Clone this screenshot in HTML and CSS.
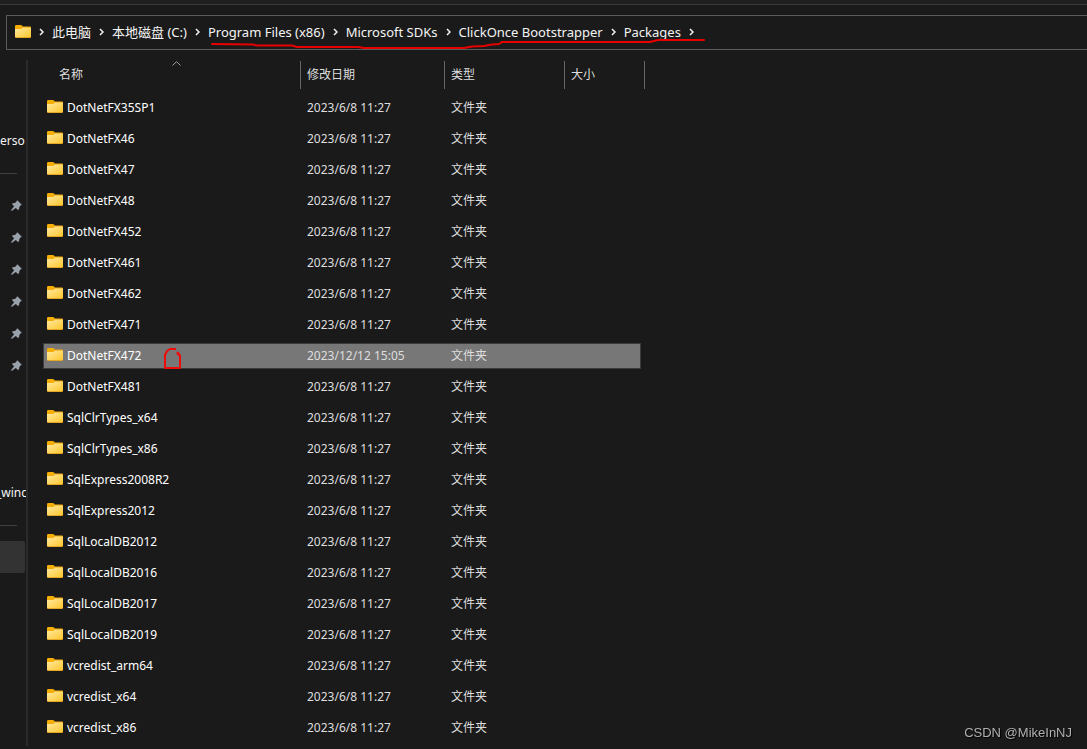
FILE: index.html
```
<!DOCTYPE html>
<html lang="zh-CN">
<head>
<meta charset="utf-8">
<title>Packages</title>
<link rel="stylesheet" href="styles.css">
</head>
<body>
<svg class="defs" aria-hidden="true">
  <defs>
    <linearGradient id="fold" x1="0" y1="0" x2="1" y2="1">
      <stop offset="0" stop-color="#ffe9a2"/><stop offset="1" stop-color="#ffc72e"/>
    </linearGradient>
    <symbol id="folder" viewBox="0 0 16 13">
      <path d="M0 1.2Q0 0 1.2 0H6.2L8 1.6H15Q16 1.6 16 2.6V6H0Z" fill="#f5ad08"/>
      <path d="M0 4H6.2L8 2.4H15.2Q16 2.4 16 3.2V12Q16 13 15 13H1Q0 13 0 12Z" fill="#dc9a18"/>
      <path d="M0 4H6.2L8 2.4H15.2Q16 2.4 16 3.2V11.3Q16 12.2 15 12.2H1Q0 12.2 0 11.3Z" fill="url(#fold)"/>
    </symbol>
    <symbol id="chev" viewBox="0 0 5 8">
      <path d="M1 1L4 4L1 7" fill="none" stroke="#f2f2f2" stroke-width="1.5"/>
    </symbol>
    <symbol id="pin" viewBox="0 0 11 11">
      <path d="M6.3 0.2L10.8 4.7L9.7 5.2L8.4 7L8 9.4L7 10L4.8 7.9L1 10.8L0.2 10.8L0.2 10L3.1 6.2L1 4L1.6 3.2L4 3L5.6 1.3Z" fill="#98a1a9"/>
    </symbol>
  </defs>
</svg>
<div class="toolbar-edge"></div>
<header class="address">
  <nav class="crumbs" aria-label="路径">
    <svg class="folder"><use href="#folder"/></svg>
    <svg class="chev"><use href="#chev"/></svg>
    <a class="crumb" href="#">此电脑</a>
    <svg class="chev"><use href="#chev"/></svg>
    <a class="crumb" href="#">本地磁盘 (C:)</a>
    <svg class="chev"><use href="#chev"/></svg>
    <a class="crumb" href="#">Program Files (x86)</a>
    <svg class="chev"><use href="#chev"/></svg>
    <a class="crumb" href="#">Microsoft SDKs</a>
    <svg class="chev"><use href="#chev"/></svg>
    <a class="crumb" href="#">ClickOnce Bootstrapper</a>
    <svg class="chev"><use href="#chev"/></svg>
    <a class="crumb" href="#">Packages</a>
    <svg class="chev"><use href="#chev"/></svg>
  </nav>
  <svg class="underline" viewBox="0 0 496 12" aria-hidden="true"><path d="M2 5L43 5.5L47 6.5H82L87 8H148L154 9H254L262 7.5L274 7L282 5.5L289 5L292 3H440L448 1H494"/></svg>
</header>
<div class="window">
  <aside class="side">
    <a class="side-item" href="#">erso</a>
    <div class="side-rule"></div>
    <div class="side-item pinned"><svg class="pin"><use href="#pin"/></svg></div>
    <div class="side-item pinned"><svg class="pin"><use href="#pin"/></svg></div>
    <div class="side-item pinned"><svg class="pin"><use href="#pin"/></svg></div>
    <div class="side-item pinned"><svg class="pin"><use href="#pin"/></svg></div>
    <div class="side-item pinned"><svg class="pin"><use href="#pin"/></svg></div>
    <div class="side-item pinned"><svg class="pin"><use href="#pin"/></svg></div>
    <div class="side-item"></div>
    <div class="side-item"></div>
    <div class="side-item"></div>
    <a class="side-item scrolled" href="#">_winc</a>
    <div class="side-rule"></div>
    <div class="side-item active"></div>
  </aside>
  <main class="files">
    <table class="list">
      <colgroup><col class="c-name"><col class="c-date"><col class="c-type"><col class="c-size"><col class="c-end"></colgroup>
      <thead>
        <tr>
          <th><button class="sort first" type="button">名称<svg class="asc" viewBox="0 0 9 5"><path d="M0.5 4.5L4.5 0.7L8.5 4.5"/></svg></button></th>
          <th><button class="sort" type="button">修改日期</button></th>
          <th><button class="sort" type="button">类型</button></th>
          <th colspan="2"><button class="sort" type="button">大小</button></th>
        </tr>
      </thead>
      <tbody id="rows"></tbody>
    </table>
  </main>
</div>
<div class="watermark">CSDN @MikeInNJ</div>
<script src="files.js"></script>
</body>
</html>
```
FILE: styles.css
```
* { box-sizing: border-box; }
body {
  margin: 0;
  min-height: 100vh;
  background: #1a1a1a;
  color: #f4f4f4;
  font: 12px/16px "Noto Sans", "Noto Sans CJK SC", sans-serif;
  overflow: hidden;
}
a { color: inherit; text-decoration: none; }
.defs { position: absolute; width: 0; height: 0; }
.toolbar-edge { height: 5px; background: #202020; border-bottom: 1px solid #3a3a3a; }
.address {
  position: relative;
  margin: 10px 0 0 6px;
  height: 35px;
  border: 1px solid #5a5a5a;
  border-right: 0;
  display: flex;
  align-items: center;
}
.crumbs { display: flex; align-items: center; gap: 8px; padding: 0 0 2px 8px; font-size: 13px; white-space: nowrap; }
.folder { width: 16px; height: 13px; flex: none; }
.chev { width: 5px; height: 8px; flex: none; }
.underline { position: absolute; left: 203px; top: 23px; width: 496px; height: 12px; overflow: visible; }
.underline path { fill: none; stroke: #e60000; stroke-width: 2; stroke-linecap: round; stroke-linejoin: round; }
.window { display: flex; }
.side { width: 28px; flex: none; margin-top: 10px; padding-top: 65px; border-right: 2px solid #2b2b2b; overflow: hidden; }
.side-item { display: flex; align-items: center; width: 25px; height: 32px; overflow: hidden; }
.side-item.scrolled { width: 30px; margin-left: -4px; }
.side-rule { display: flex; align-items: center; height: 32px; }
.side-rule::before { content: ""; width: 17px; height: 1px; background: #3f3f3f; }
.pinned { padding-left: 11px; }
.pin { width: 11px; height: 11px; flex: none; }
.active { background: #333; border-radius: 0 2px 2px 0; }
.files { flex: 1; padding: 5px 0 0 15px; }
.list { width: 602px; table-layout: fixed; border-collapse: separate; border-spacing: 0 5px; }
.c-name { width: 258px; }
.c-date { width: 144px; }
.c-type { width: 120px; }
.c-size { width: 76px; }
.c-end { width: 4px; }
.list th { height: 30px; padding: 0; text-align: left; vertical-align: middle; font-weight: 400; }
.sort {
  position: relative;
  display: block;
  width: 100%;
  height: 28px;
  padding: 0 6px;
  border: 0;
  border-right: 1px solid #666;
  background: none;
  color: #dedede;
  font: inherit;
  text-align: left;
}
.sort.first { padding-left: 16px; }
.asc { position: absolute; left: 50%; top: 0; width: 9px; height: 5px; }
.asc path { fill: none; stroke: #a0a0a0; }
.list td { height: 26px; padding: 0 6px; color: #dedede; }
.list td:first-child { padding-left: 4px; color: #fff; }
.list td:last-child { padding: 0; }
.name { position: relative; display: flex; align-items: center; gap: 4px; }
.name .folder { margin-bottom: 3px; }
.selected td:not(:last-child) { background: #777; border: solid #3c3c3c; border-width: 1px 0; }
.selected td:first-child { border-left-width: 1px; padding-left: 3px; }
.selected td:nth-child(4) { border-right-width: 1px; }
.mark { position: absolute; left: 116px; top: 0; width: 19px; height: 22px; overflow: visible; }
.mark path { fill: none; stroke: #f00a0a; stroke-width: 2; stroke-linejoin: round; }
.watermark { position: fixed; right: 15px; bottom: 6px; font: 13px/20px "Liberation Sans", sans-serif; color: #b0b0b0; text-shadow: 1px 1px 1px #000; }
```
FILE: files.js
```
const names = ["DotNetFX35SP1", "DotNetFX46", "DotNetFX47", "DotNetFX48", "DotNetFX452", "DotNetFX461", "DotNetFX462", "DotNetFX471", "DotNetFX472", "DotNetFX481", "SqlClrTypes_x64", "SqlClrTypes_x86", "SqlExpress2008R2", "SqlExpress2012", "SqlLocalDB2012", "SqlLocalDB2016", "SqlLocalDB2017", "SqlLocalDB2019", "vcredist_arm64", "vcredist_x64", "vcredist_x86"];
const mark = '<svg class="mark" viewBox="0 0 19 22"><path d="M13 1H7L4 3L2 7V20H17V8L14 5M14 4L17 7"/></svg>';
document.getElementById("rows").innerHTML = names.map(function (name) {
  const selected = name === "DotNetFX472";
  return '<tr' + (selected ? ' class="selected"' : '') + '><td><div class="name"><svg class="folder"><use href="#folder"/></svg><span>' + name + '</span>' + (selected ? mark : '') + '</div></td><td>' + (selected ? '2023/12/12 15:05' : '2023/6/8 11:27') + '</td><td>文件夹</td><td></td><td></td></tr>';
}).join("");
```
